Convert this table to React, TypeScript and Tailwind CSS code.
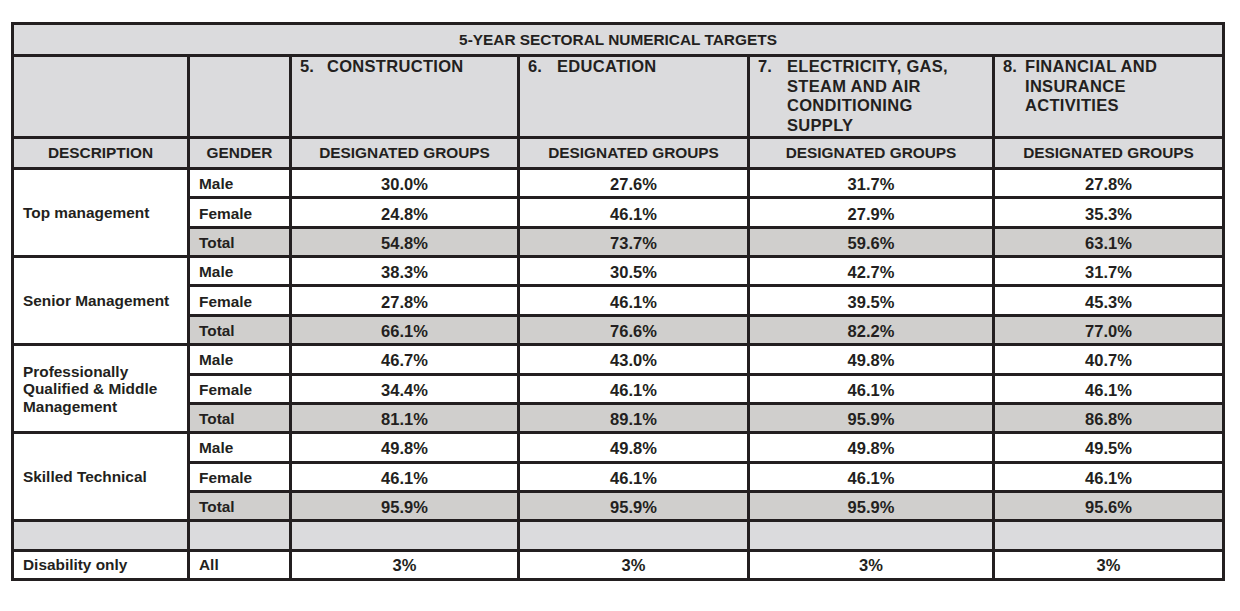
import React from 'react';

type Row = [string, string, string, string, string];

const GROUPS: { label: string; rows: Row[] }[] = [
  {
    label: 'Top management',
    rows: [
      ['Male', '30.0%', '27.6%', '31.7%', '27.8%'],
      ['Female', '24.8%', '46.1%', '27.9%', '35.3%'],
      ['Total', '54.8%', '73.7%', '59.6%', '63.1%'],
    ],
  },
  {
    label: 'Senior Management',
    rows: [
      ['Male', '38.3%', '30.5%', '42.7%', '31.7%'],
      ['Female', '27.8%', '46.1%', '39.5%', '45.3%'],
      ['Total', '66.1%', '76.6%', '82.2%', '77.0%'],
    ],
  },
  {
    label: 'Professionally Qualified & Middle Management',
    rows: [
      ['Male', '46.7%', '43.0%', '49.8%', '40.7%'],
      ['Female', '34.4%', '46.1%', '46.1%', '46.1%'],
      ['Total', '81.1%', '89.1%', '95.9%', '86.8%'],
    ],
  },
  {
    label: 'Skilled Technical',
    rows: [
      ['Male', '49.8%', '49.8%', '49.8%', '49.5%'],
      ['Female', '46.1%', '46.1%', '46.1%', '46.1%'],
      ['Total', '95.9%', '95.9%', '95.9%', '95.6%'],
    ],
  },
];

const SECTORS: { num: string; indent: string; lines: string[] }[] = [
  { num: '5.', indent: 'w-[27px]', lines: ['CONSTRUCTION'] },
  { num: '6.', indent: 'w-[29px]', lines: ['EDUCATION'] },
  { num: '7.', indent: 'w-[29px]', lines: ['ELECTRICITY, GAS,', 'STEAM AND AIR', 'CONDITIONING', 'SUPPLY'] },
  { num: '8.', indent: 'w-[22px]', lines: ['FINANCIAL AND', 'INSURANCE', 'ACTIVITIES'] },
];

const light = 'bg-[#dbdbdd]';
const dark = 'bg-[#d0cfcd]';

export default function App() {
  return (
    <div className="min-h-[611px] bg-white pt-[22px] pl-[11px] font-['Liberation_Sans',Arial,sans-serif] text-[15.4px] leading-5 font-bold text-[#231f20]">
      <div className="grid h-[559px] w-[1214px] grid-cols-[173px_99px_225px_227px_242px_227px] grid-rows-[29px_79px_28px_repeat(14,minmax(0,1fr))] gap-[3px] bg-[#231f20] p-[3px]">
        {/* title */}
        <div className={`col-span-6 flex items-center justify-center pt-px ${light}`}>
          5-YEAR SECTORAL NUMERICAL TARGETS
        </div>

        {/* sector headings */}
        <div className={light}></div>
        <div className={light}></div>
        {SECTORS.map((s) => (
          <div key={s.num} className={`flex pl-2 text-[16.5px] leading-[19.7px] ${light}`}>
            <span className={`${s.indent} shrink-0`}>{s.num}</span>
            <div className="tracking-[0.3px]">
              {s.lines.map((l) => (
                <div key={l}>{l}</div>
              ))}
            </div>
          </div>
        ))}

        {/* column labels */}
        <div className={`flex items-center justify-center ${light}`}>DESCRIPTION</div>
        <div className={`flex items-center justify-center ${light}`}>GENDER</div>
        {SECTORS.map((s) => (
          <div key={s.num} className={`flex items-center justify-center ${light}`}>
            DESIGNATED GROUPS
          </div>
        ))}

        {/* groups */}
        {GROUPS.map((g) => (
          <React.Fragment key={g.label}>
            <div className="row-span-3 flex items-center bg-white pl-[9px] pr-2 pt-px leading-[17.5px]">
              {g.label}
            </div>
            {g.rows.map((r, i) => {
              const bg = i === 2 ? dark : 'bg-white';
              return (
                <React.Fragment key={r[0]}>
                  <div className={`flex items-center pl-[9px] pt-[2px] ${bg}`}>{r[0]}</div>
                  {r.slice(1).map((v, j) => (
                    <div key={j} className={`flex items-center justify-center pt-[2px] text-[16.5px] ${bg}`}>
                      {v}
                    </div>
                  ))}
                </React.Fragment>
              );
            })}
          </React.Fragment>
        ))}

        {/* spacer row */}
        {[0, 1, 2, 3, 4, 5].map((i) => (
          <div key={i} className={light}></div>
        ))}

        {/* disability */}
        <div className="flex items-center bg-white pl-[9px] pt-px">Disability only</div>
        <div className="flex items-center bg-white pl-[9px] pt-px">All</div>
        {[0, 1, 2, 3].map((i) => (
          <div key={i} className="flex items-center justify-center bg-white text-[16.5px]">
            3%
          </div>
        ))}
      </div>
    </div>
  );
}
